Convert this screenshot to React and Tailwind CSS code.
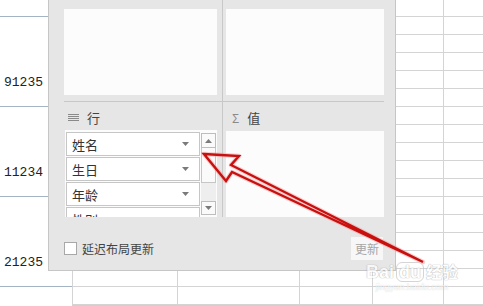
import React from 'react';

const cjk = { fontFamily: '"Noto Sans CJK SC", "Noto Sans", sans-serif' };

function Rows({ first, count }) {
    return (
        <>
            <div className={`${first} shrink-0 border-b border-[#d4d4d4]`} />
            {Array.from({ length: count }).map((_, i) => (
                <div key={i} className="h-[18px] shrink-0 border-b border-[#d4d4d4]" />
            ))}
            <div className="h-[2px] shrink-0 bg-[#d0d0d0]" />
        </>
    );
}

function Caret({ up }) {
    return (
        <svg width="7" height="4" viewBox="0 0 7 4">
            <polygon points={up ? '0,4 7,4 3.5,0' : '0,0 7,0 3.5,4'} fill="#7a7a7a" />
        </svg>
    );
}

function Field({ label }) {
    return (
        <div className="h-[24px] w-[134px] shrink-0 border border-[#c6c6c6] bg-white flex items-center justify-between pl-[5px] pr-[10px]">
            <span className="text-[13px] leading-none text-[#333]">{label}</span>
            <Caret />
        </div>
    );
}

function NumCell({ value, lead }) {
    return (
        <div className="h-[90px] shrink-0 border-b border-[#a3b4c4] overflow-hidden flex justify-end pr-[5px] pt-[58px]">
            <span
                className="shrink-0 whitespace-nowrap text-[13px] leading-[15px] text-[#222]"
                style={{ fontFamily: '"Liberation Mono", monospace' }}
            >
                {lead && <span className="mr-[6px]">{lead}</span>}
                {value}
            </span>
        </div>
    );
}

export default function App() {
    return (
        <div className="relative w-[483px] h-[306px] overflow-hidden bg-white flex" style={cjk}>
            {/* left sheet column */}
            <div className="w-[48px] shrink-0 flex flex-col">
                <div className="h-[17px] shrink-0 border-b border-[#a3b4c4]" />
                <NumCell value="91235" />
                <NumCell value="11234" lead="3" />
                <NumCell value="21235" />
            </div>

            {/* pivot pane + sheet below it */}
            <div className="w-[348px] shrink-0 flex flex-col">
                <div className="h-[271px] shrink-0 bg-[#e6e6e6] border-l border-r border-b border-[#c6c6c6] pl-[15px] pr-[11px] flex flex-col">
                    <div className="h-[101px] flex">
                        <div className="w-[153px] pt-[9px]">
                            <div className="h-[86px] bg-[#fcfcfc]" />
                        </div>
                        <div className="w-[5px]" />
                        <div className="w-px bg-[#c8c8c8]" />
                        <div className="w-[3px]" />
                        <div className="w-[158px] pt-[9px]">
                            <div className="h-[86px] bg-[#fcfcfc]" />
                        </div>
                    </div>
                    <div className="h-px bg-[#c8c8c8]" />
                    <div className="h-[115px] flex">
                        <div className="w-[153px] flex flex-col">
                            <div className="h-[28px] flex items-center pl-[4px] pt-[2px] gap-[8px]">
                                <svg width="11" height="7" viewBox="0 0 11 7">
                                    <rect x="0" y="0" width="11" height="1" fill="#8a8a8a" />
                                    <rect x="0" y="2" width="11" height="1" fill="#8a8a8a" />
                                    <rect x="0" y="4" width="11" height="1" fill="#8a8a8a" />
                                    <rect x="0" y="6" width="11" height="1" fill="#8a8a8a" />
                                </svg>
                                <span className="text-[13px] leading-none text-[#444]">行</span>
                            </div>
                            <div className="h-[87px] w-[152px] ml-px bg-[#fcfcfc] flex overflow-hidden pl-px">
                                <div className="flex flex-col gap-px pt-[2px]">
                                    <Field label="姓名" />
                                    <Field label="生日" />
                                    <Field label="年龄" />
                                    <Field label="性别" />
                                </div>
                                <div className="ml-px mt-[3px] w-[15px] h-[82px] bg-[#eeeeee] flex flex-col">
                                    <div className="h-[15px] border border-[#bdbdbd] bg-[#fafafa] flex items-center justify-center">
                                        <Caret up />
                                    </div>
                                    <div className="h-[35px] border border-t-0 border-[#c6c6c6] bg-[#fafafa]" />
                                    <div className="flex-1" />
                                    <div className="h-[14px] border border-[#bdbdbd] bg-[#fafafa] flex items-center justify-center">
                                        <Caret />
                                    </div>
                                </div>
                            </div>
                        </div>
                        <div className="w-[5px]" />
                        <div className="w-px bg-[#c8c8c8]" />
                        <div className="w-[3px]" />
                        <div className="w-[158px] flex flex-col">
                            <div className="h-[29px] flex items-center pl-[6px] pt-[2px] gap-[8px]">
                                <span className="text-[12px] leading-none text-[#8a8a8a]">Σ</span>
                                <span className="text-[13px] leading-none text-[#444]">值</span>
                            </div>
                            <div className="h-[86px] bg-[#fcfcfc]" />
                        </div>
                    </div>
                    <div className="flex-1 flex items-center justify-between pt-[10px]">
                        <div className="flex items-center gap-[5px]">
                            <div className="w-[13px] h-[13px] border border-[#a8a8a8] bg-white" />
                            <span className="text-[12px] leading-none text-[#444]">延迟布局更新</span>
                        </div>
                        <div className="w-[32px] h-[23px] mr-px bg-[#f7f7f7] flex items-center justify-center text-[12px] leading-none text-[#a6a6a6]">
                            更新
                        </div>
                    </div>
                </div>
                <div className="flex-1 flex">
                    <div className="w-[24px]">
                        <div className="h-[16px] border-b border-[#a3b4c4]" />
                    </div>
                    {['w-[105px]', 'w-[122px]', 'w-[73px]', 'flex-1'].map((w) => (
                        <div key={w} className={`${w} border-l border-[#d4d4d4] flex flex-col`}>
                            <div className="h-[16px] shrink-0 border-b border-[#d4d4d4]" />
                            <div className="h-[18px] shrink-0 border-b border-[#d4d4d4]" />
                            <div className="h-[2px] shrink-0 bg-[#d0d0d0]" />
                        </div>
                    ))}
                </div>
            </div>

            {/* right sheet columns */}
            <div className="flex-1 flex">
                <div className="w-[48px] border-r border-[#d4d4d4] flex flex-col">
                    <Rows first="h-[17px]" count={16} />
                </div>
                <div className="flex-1 flex flex-col">
                    <Rows first="h-[17px]" count={16} />
                </div>
            </div>

            {/* annotation arrow */}
            <svg
                className="absolute inset-0 pointer-events-none"
                width="483"
                height="306"
                viewBox="0 0 483 306"
            >
                <polygon
                    points="204,154 239,156 231,165 423,262 232,172 226,181"
                    fill="none"
                    stroke="#f4a0a0"
                    strokeWidth="4.5"
                    strokeLinejoin="round"
                    opacity="0.5"
                />
                <polygon
                    points="204,154 239,156 231,165 423,262 232,172 226,181"
                    fill="none"
                    stroke="#c8100f"
                    strokeWidth="2.4"
                    strokeLinejoin="miter"
                />
            </svg>

            {/* watermark */}
            <div className="absolute left-[366px] top-[262px] pointer-events-none flex flex-col items-center opacity-70">
                <div
                    className="flex items-baseline text-[18px] leading-none font-bold text-white"
                    style={{ fontFamily: '"Liberation Sans", sans-serif', textShadow: '0 0 1px #9a9a9a, 0 0 1px #9a9a9a' }}
                >
                    <span>Bai</span>
                    <span className="ml-[2px] px-[2px] rounded-[6px] border border-[#c4c4c4]">du</span>
                    <span className="ml-[2px] text-[16px]" style={cjk}>经验</span>
                </div>
                <div
                    className="mt-[1px] text-[9px] leading-none text-white"
                    style={{ fontFamily: '"Liberation Sans", sans-serif', textShadow: '0 0 1px #b0b0b0' }}
                >
                    jingyan.baidu.com
                </div>
            </div>
        </div>
    );
}
